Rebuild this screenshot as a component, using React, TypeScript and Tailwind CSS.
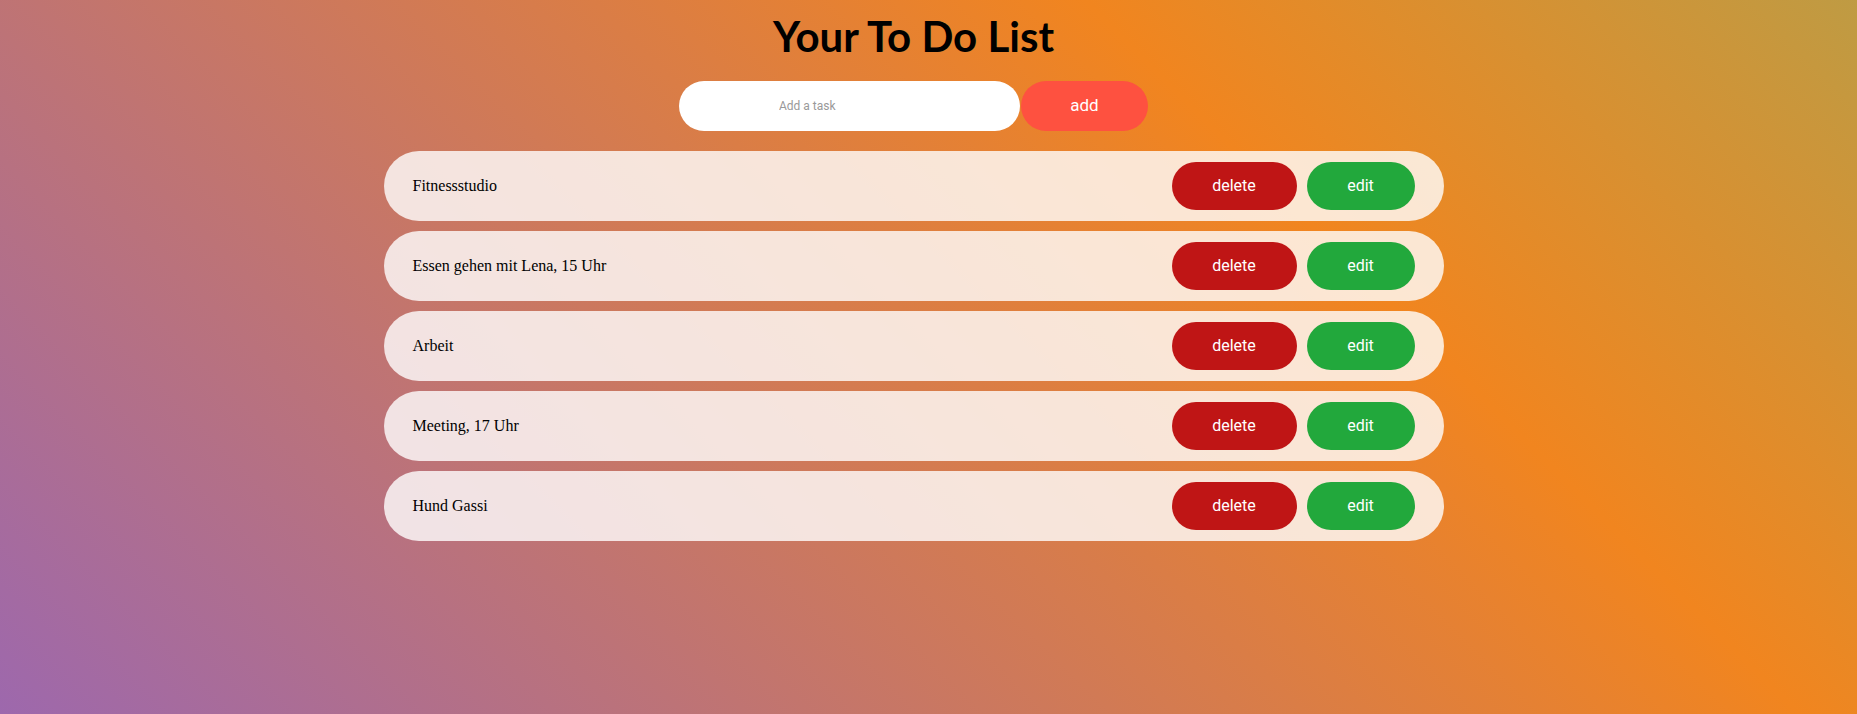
import { useState } from 'react';

const initialTasks = [
  'Fitnessstudio',
  'Essen gehen mit Lena, 15 Uhr',
  'Arbeit',
  'Meeting, 17 Uhr',
  'Hund Gassi',
];

function TaskRow({ text }: { text: string }) {
  return (
    <li className="flex h-[70px] w-[1060px] items-center justify-between rounded-full bg-white/80 pl-[29px] pr-[29px]">
      <span className="font-['Liberation_Serif',serif] text-[16px] text-black">{text}</span>
      <div className="flex items-center gap-[10px] font-['Roboto',sans-serif] text-[16px] text-white">
        <button className="h-[48px] w-[125px] rounded-full bg-[#bf1515]">delete</button>
        <button className="h-[48px] w-[108px] rounded-full bg-[#22a83c]">edit</button>
      </div>
    </li>
  );
}

export default function App() {
  const [tasks] = useState(initialTasks);

  return (
    <div className="min-h-[714px] w-full bg-[linear-gradient(45deg,#9d68ad_0%,#f1851f_70%,#bf9b43_100%)] pt-[10px]">
      <div className="flex flex-col items-center pr-[30px]">
        <h1 className="font-['Lato',sans-serif] text-[42px] font-bold leading-[52px] text-black">
          Your To Do List
        </h1>
        <div className="mt-[19px] flex">
          <input
            className="h-[50px] w-[341px] rounded-full bg-white pl-[100px] font-['Roboto',sans-serif] text-[12px] outline-none placeholder:text-[#999]"
            placeholder="Add a task"
          />
          <button className="ml-[1px] h-[50px] w-[127px] rounded-full bg-[#fe5140] font-['Roboto',sans-serif] text-[17px] text-white">
            add
          </button>
        </div>
      </div>
      <ul className="mt-[20px] flex flex-col items-center gap-[10px] pr-[30px]">
        {tasks.map((t) => (
          <TaskRow key={t} text={t} />
        ))}
      </ul>
    </div>
  );
}
